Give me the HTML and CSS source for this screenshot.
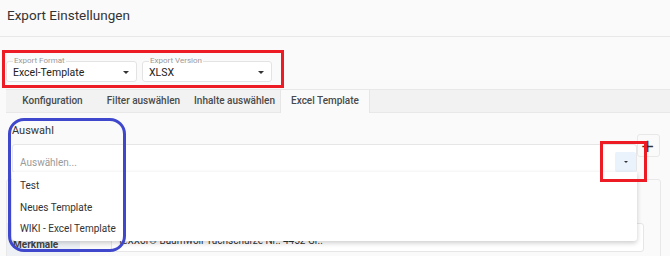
FILE: index.html
```html
<!DOCTYPE html>
<html lang="de">
<head>
    <meta charset="UTF-8">
    <title>Export Einstellungen</title>
    <link rel="stylesheet" href="styles.css">
</head>
<body>
    <div class="page">
        <header class="page-header">
            <h1>Export Einstellungen</h1>
        </header>

        <div class="format-row">
            <fieldset class="field field-format">
                <legend>Export Format</legend>
                <div class="field-value"><span>Excel-Template</span><span class="caret"></span></div>
            </fieldset>
            <fieldset class="field field-version">
                <legend>Export Version</legend>
                <div class="field-value"><span>XLSX</span><span class="caret"></span></div>
            </fieldset>
        </div>

        <nav class="tabs">
            <div class="tab">Konfiguration</div>
            <div class="tab">Filter auswählen</div>
            <div class="tab">Inhalte auswählen</div>
            <div class="tab active">Excel Template</div>
        </nav>

        <section class="content">
            <div class="auswahl-label">Auswahl</div>
            <div class="select-row">
                <div class="select">
                    <span class="placeholder">Auswählen...</span>
                    <span class="select-btn"><span class="caret small"></span></span>
                    <ul class="dropdown">
                        <li>Test</li>
                        <li>Neues Template</li>
                        <li>WIKI - Excel Template</li>
                    </ul>
                </div>
                <button class="add-btn">+</button>
            </div>

            <div class="panel">
                <div class="panel-row">
                    <div class="panel-label">Merkmale</div>
                    <div class="panel-field">
                        <div class="panel-input">teXXor® Baumwoll-Tuchschürze Nr.: 4452 Gr.:</div>
                    </div>
                </div>
            </div>
        </section>

        <!-- Markierungen aus dem Screenshot -->
        <div class="mark mark-blue"></div>
        <div class="mark mark-red"></div>
    </div>
</body>
</html>
```

FILE: styles.css
```css
body {
    font-family: Roboto, "Liberation Sans", Arial, sans-serif;
    background-color: #fafafa;
    color: #333;
    margin: 0;
    padding: 0;
}
.page {
    position: relative;
    width: 670px;
    height: 256px;
    overflow: hidden;
}
.page-header {
    height: 37px;
    border-bottom: 1px solid #e8e8e8;
    padding-left: 7px;
    box-sizing: border-box;
}
.page-header h1 {
    margin: 0;
    padding-top: 5px;
    font-size: 13.5px;
    line-height: 20px;
    font-weight: normal;
    color: #333;
}
.format-row {
    display: flex;
    gap: 5px;
    width: 282px;
    height: 38px;
    box-sizing: border-box;
    margin: 13px 0 0 2px;
    padding: 3px 9px 3px 1px;
    border: 3px solid #ed1c24;
}
.field {
    margin: 0;
    padding: 0 6px 3px 6px;
    border: 1px solid #e3e3e3;
    border-radius: 3px;
    background-color: white;
    box-sizing: border-box;
    min-width: 0;
}
.field-format {
    width: 131px;
}
.field-version {
    width: 130px;
}
.field legend {
    font-size: 8px;
    line-height: 10px;
    color: #9a9a9a;
    padding: 0 1px;
}
.field-value {
    display: flex;
    justify-content: space-between;
    align-items: center;
    font-size: 10.5px;
    line-height: 13px;
    color: #222;
}
.caret {
    width: 0;
    height: 0;
    border-left: 3px solid transparent;
    border-right: 3px solid transparent;
    border-top: 3px solid #333;
    margin-right: 1px;
}
.caret.small {
    border-left-width: 2.5px;
    border-right-width: 2.5px;
    border-top-width: 2.5px;
    margin: 0;
}
.tabs {
    display: flex;
    margin: 1px 0 0 6px;
    padding-left: 1px;
    height: 24px;
    background-color: #f2f2f2;
    border-top: 1px solid #e8e8e8;
    border-bottom: 1px solid #e8e8e8;
    box-sizing: border-box;
}
.tab {
    width: 91px;
    text-align: center;
    font-size: 10px;
    font-weight: 500;
    line-height: 22px;
    color: #4a4a4a;
}
.tab.active {
    background-color: #fafafa;
    border-left: 1px solid #e6e6e6;
    border-right: 1px solid #e6e6e6;
    margin-bottom: -1px;
    width: 90px;
    box-sizing: border-box;
}
.content {
    padding: 12px 10px 0 12px;
}
.auswahl-label {
    font-size: 11px;
    line-height: 11px;
    color: #333;
}
.select-row {
    display: flex;
    align-items: flex-start;
    margin-top: -2px;
}
.select {
    position: relative;
    flex: 1;
    height: 29px;
    margin-top: 10px;
    box-sizing: border-box;
    display: flex;
    align-items: center;
    justify-content: space-between;
    padding: 7px 0 0 7px;
    background-color: white;
    border: 1px solid #e6e6e6;
    border-radius: 3px;
}
.placeholder {
    font-size: 10px;
    color: #9a9a9a;
}
.select-btn {
    display: flex;
    align-items: center;
    justify-content: center;
    width: 21px;
    height: 20px;
    background-color: #eaf3fb;
    border-radius: 2px;
}
.dropdown {
    position: absolute;
    top: 100%;
    left: -1px;
    right: -1px;
    margin: 0;
    padding: 3px 0 1px 0;
    list-style: none;
    background-color: white;
    border-radius: 0 0 3px 3px;
    box-shadow: 0 2px 5px rgba(0, 0, 0, 0.2);
    z-index: 2;
}
.dropdown li {
    height: 21.7px;
    line-height: 21.7px;
    padding-left: 8px;
    font-size: 10px;
    color: #333;
}
.add-btn {
    width: 23px;
    height: 23px;
    padding: 0;
    background-color: #fafafa;
    border: 1px solid #e8e8e8;
    border-radius: 3px;
    font-family: "DejaVu Sans", sans-serif;
    font-size: 17px;
    line-height: 20px;
    color: #333;
    text-indent: -2px;
}
.panel {
    margin: 6px -1px 0 -6px;
    padding-top: 43px;
    border: 1px solid #e8e8e8;
    border-radius: 3px;
    height: 100px;
}
.panel-row {
    display: flex;
    height: 50px;
}
.panel-label {
    width: 73px;
    background-color: #edf1f6;
    padding: 16px 0 0 6px;
    box-sizing: border-box;
    font-size: 10px;
    font-weight: bold;
    color: #444;
}
.panel-field {
    flex: 1;
    padding: 0 16px 0 31px;
}
.panel-input {
    height: 29px;
    box-sizing: border-box;
    padding: 11px 0 0 7px;
    background-color: white;
    border: 1px solid #e6e6e6;
    border-radius: 3px;
    font-size: 10px;
    color: #333;
}
.mark {
    position: absolute;
    box-sizing: border-box;
    z-index: 5;
}
.mark-blue {
    left: 8px;
    top: 118px;
    width: 118px;
    height: 134px;
    border: 3px solid #3f48cc;
    border-radius: 16px;
}
.mark-red {
    left: 600px;
    top: 141px;
    width: 47px;
    height: 41px;
    border: 3px solid #ed1c24;
}
```
